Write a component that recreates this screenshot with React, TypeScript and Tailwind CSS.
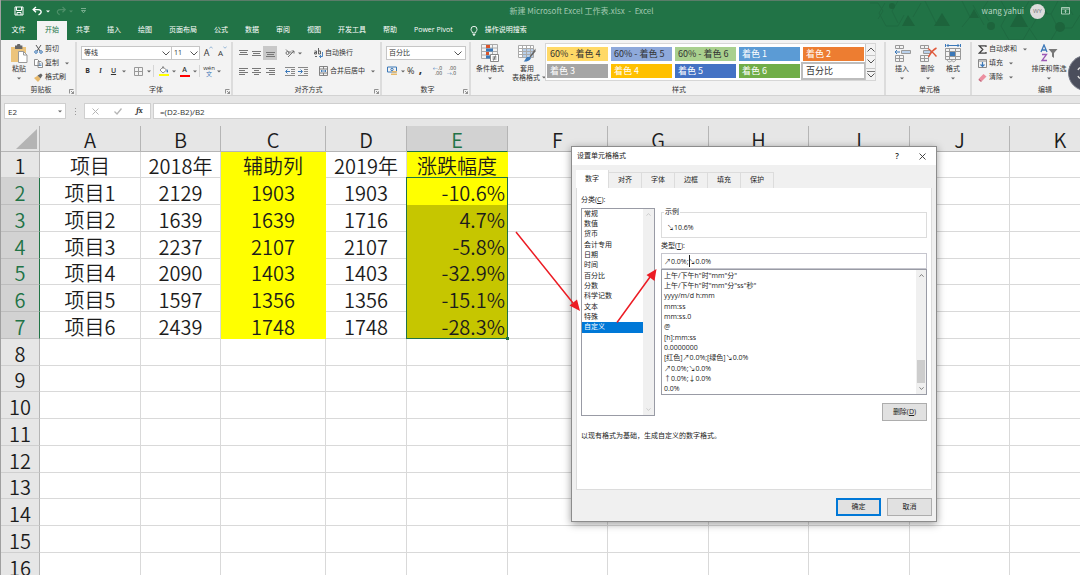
import React, { useState } from 'react';

const menuTabs = ['共享', '插入', '绘图', '页面布局', '公式', '数据', '审阅', '视图', '开发工具', '帮助', 'Power Pivot'];

const cellStyles = [
  { label: '60% - 着色 4', className: 'bg-[#ffd966] text-[#333]' },
  { label: '60% - 着色 5', className: 'bg-[#8ea9db] text-[#333]' },
  { label: '60% - 着色 6', className: 'bg-[#a9d08e] text-[#333]' },
  { label: '着色 1', className: 'bg-[#5b9bd5] text-white' },
  { label: '着色 2', className: 'bg-[#ed7d31] text-white' },
  { label: '着色 3', className: 'bg-[#a5a5a5] text-white' },
  { label: '着色 4', className: 'bg-[#ffc000] text-white' },
  { label: '着色 5', className: 'bg-[#4472c4] text-white' },
  { label: '着色 6', className: 'bg-[#70ad47] text-white' },
  { label: '百分比', className: 'bg-white text-[#333] outline-2 outline-[#bdbdbd]' },
];

const columns = [
  { name: 'A', width: 'w-[101px]' },
  { name: 'B', width: 'w-[80px]' },
  { name: 'C', width: 'w-[105px]' },
  { name: 'D', width: 'w-[81px]' },
  { name: 'E', width: 'w-[101px]' },
  { name: 'F', width: 'w-[100px]' },
  { name: 'G', width: 'w-[101px]' },
  { name: 'H', width: 'w-[100px]' },
  { name: 'I', width: 'w-[101px]' },
  { name: 'J', width: 'w-[100px]' },
  { name: 'K', width: 'w-[101px]' },
];

const data = [
  ['项目', '2018年', '辅助列', '2019年', '涨跌幅度'],
  ['项目1', '2129', '1903', '1903', '-10.6%'],
  ['项目2', '1639', '1639', '1716', '4.7%'],
  ['项目3', '2237', '2107', '2107', '-5.8%'],
  ['项目4', '2090', '1403', '1403', '-32.9%'],
  ['项目5', '1597', '1356', '1356', '-15.1%'],
  ['项目6', '2439', '1748', '1748', '-28.3%'],
];

const categories = ['常规', '数值', '货币', '会计专用', '日期', '时间', '百分比', '分数', '科学记数', '文本', '特殊', '自定义'];

const formats = [
  '上午/下午h"时"mm"分"',
  '上午/下午h"时"mm"分"ss"秒"',
  'yyyy/m/d h:mm',
  'mm:ss',
  'mm:ss.0',
  '@',
  '[h]:mm:ss',
  '0.0000000',
  '[红色]↗0.0%;[绿色]↘0.0%',
  '↗0.0%;↘0.0%',
  '↑0.0%;↓0.0%',
  '0.0%',
];

const Caret = ({ className = 'text-[#666]' }: { className?: string }) => (
  <svg className={`shrink-0 ${className}`} width="4" height="3" viewBox="0 0 4 3">
    <path d="M0 0.5h4L2 2.5z" fill="currentColor" />
  </svg>
);

const Chevron = ({ up = false, className = '' }: { up?: boolean; className?: string }) => (
  <svg className={`shrink-0 ${className}`} width="8" height="5" viewBox="0 0 8 5" fill="none" stroke="currentColor">
    <path d={up ? 'M0.5 4.5L4 1l3.5 3.5' : 'M0.5 0.5L4 4l3.5-3.5'} />
  </svg>
);

const Launcher = () => (
  <svg width="5" height="5" viewBox="0 0 5 5" fill="none" stroke="#777" strokeWidth="0.8">
    <path d="M0.5 4.5V0.5h4M2 2l2.5 2.5M4.5 2.3v2.2H2.3" />
  </svg>
);

const Divider = () => <span className="h-3 w-px shrink-0 bg-[#d5d5d5]" />;

const Group = ({ label, launcher = false, className, children }: { label: string; launcher?: boolean; className: string; children: React.ReactNode }) => (
  <section className={`relative flex shrink-0 flex-col border-r-2 border-[#dcdcdc] ${className}`}>
    <div className="flex flex-1">{children}</div>
    <div className="h-[10px] text-center leading-[10px]">{label}</div>
    {launcher && (
      <button aria-label={label} className="absolute right-px bottom-px">
        <Launcher />
      </button>
    )}
  </section>
);

const SmallButton = ({ label, caret = false, children }: { label: string; caret?: boolean; children: React.ReactNode }) => (
  <button className="flex h-[14px] items-center gap-[2px] whitespace-nowrap">
    {children}
    <span>{label}</span>
    {caret && <span className="pl-1"><Caret /></span>}
  </button>
);

const BigButton = ({ label, className, children }: { label: string; className: string; children: React.ReactNode }) => (
  <button className={`flex shrink-0 flex-col items-center whitespace-nowrap ${className}`}>
    <span className="flex h-[22px] items-center">{children}</span>
    <span className="leading-[10px]">{label}</span>
    <span className="flex h-2 items-center"><Caret /></span>
  </button>
);

const IconButton = ({ label, className = 'w-[13px]', children }: { label: string; className?: string; children: React.ReactNode }) => (
  <button aria-label={label} className={`flex h-[14px] shrink-0 items-center justify-center ${className}`}>
    {children}
  </button>
);

const Lines = ({ d }: { d: string }) => (
  <svg width="9" height="9" viewBox="0 0 9 9" stroke="#777" fill="none">
    <path d={d} />
  </svg>
);

const TitleBar = () => (
  <div className="relative flex h-5 items-center">
    <div className="flex items-center pl-[13px]">
      <button aria-label="保存">
        <svg width="10" height="10" viewBox="0 0 10 10" fill="none" stroke="#fff">
          <path d="M1 1h8v8H1zM2.5 1v3.5h5V1M3 9V6.5h4V9" />
        </svg>
      </button>
      <button aria-label="撤消" className="ml-2 flex items-center gap-[3px]">
        <svg width="11" height="10" viewBox="0 0 11 10" fill="none" stroke="#fff" strokeWidth="1.4">
          <path d="M4 1L1.2 3.6 4 6.2M1.5 3.6h4.5c3 0 3.7 2 2.8 3.4C8.3 8 7.3 8.5 6.5 8.8" />
        </svg>
        <Caret className="text-white" />
      </button>
      <button aria-label="恢复" className="ml-[6px] flex items-center gap-[3px]">
        <svg width="10" height="10" viewBox="0 0 10 10" fill="none" stroke="#4e9069" strokeWidth="1.2">
          <path d="M6.5 1l2.8 2.6-2.8 2.6M9 3.6H4.5c-3 0-3.6 2-2.8 3.4.4.8 1.3 1.3 2 1.6" />
        </svg>
        <Caret className="text-[#4e9069]" />
      </button>
      <button aria-label="自定义快速访问工具栏" className="ml-2">
        <svg width="5" height="6" viewBox="0 0 5 6" fill="none" stroke="#8fbca1" strokeWidth="0.8">
          <path d="M0 0.5h5M0.5 2.5h4L2.5 4.8z" />
        </svg>
      </button>
    </div>
    <h1 className="absolute inset-x-0 pl-[82px] text-center font-['Noto_Sans_CJK_SC',sans-serif] text-[8px] text-[#a3c9b2]">新建 Microsoft Excel 工作表.xlsx &nbsp;-&nbsp; Excel</h1>
    <div className="relative ml-auto flex items-center pr-[10px] text-[8px] text-[#b9d6c4]">
      <span className="font-['Noto_Sans_CJK_SC',sans-serif]">wang yahui</span>
      <span className="ml-[6px] flex size-[15px] items-center justify-center rounded-full bg-[#dcdcdc] text-[6px] text-[#777]">WY</span>
      <button aria-label="功能区显示选项" className="ml-4">
        <svg width="9" height="8" viewBox="0 0 9 8" fill="none" stroke="#c8dfd1" strokeWidth="0.8">
          <path d="M0.5 0.5h8v6.5h-8zM0.5 2h8M4.5 6V3.3M3.2 4.5l1.3-1.3 1.3 1.3" />
        </svg>
      </button>
    </div>
  </div>
);

const HeaderPattern = () => (
  <svg className="absolute top-0 right-0" width="215" height="40" viewBox="0 0 215 40" fill="none" stroke="#1f6a41">
    <path d="M5 2h8l5 8-5 8M20 2l-6 10 7 13h12l6-11M33 0l-6 10 6 12M56 2l-8 14M60 0l11 22M97 0l8 16-8 10M108 4l11 20M124 20l-7-11 6-9M136 0l7 12h14l7-12M143 12l-7 13 8 14h14l7-12M166 0l8 13-8 14M174 13h12l7-13M186 13l7 14-7 12M193 27h14l8-13M200 0l8 14M164 27l8 12" />
    <path d="M43 14l7 11H37zM77 12l8 13H69zM109 8l5 9h-10zM154 10l9 16h-18zM177 4l6 9h-12z" fill="#1d643c" stroke="none" />
    <circle cx="27" cy="5" r="3" fill="#1d643c" stroke="none" />
    <circle cx="126" cy="25" r="4" fill="#1d643c" stroke="none" />
    <circle cx="195" cy="26" r="5" fill="#1d643c" stroke="none" />
  </svg>
);

const Ribbon = () => (
  <div className="flex h-14 overflow-hidden border-b border-[#d2d2d2] bg-[#f3f3f3] pt-[2px] text-[#333]">
    <Group label="剪贴板" launcher className="w-[76px] pl-[6px]">
      <BigButton label="粘贴" className="w-6">
        <svg width="18" height="19" viewBox="0 0 18 19">
          <path d="M1 3h15v15H1z" fill="#ecc47c" />
          <path d="M5 1.5h2a1.7 1.7 0 0 1 3.4 0h2V5H5z" fill="#666" />
          <path d="M8.5 7.5h5l3.5 3.5v7.5H8.5z" fill="#fff" stroke="#999" />
          <path d="M13.5 7.5V11H17" fill="none" stroke="#999" />
        </svg>
      </BigButton>
      <div className="flex flex-col pl-[3px]">
        <SmallButton label="剪切">
          <svg width="9" height="9" viewBox="0 0 9 9" fill="none">
            <path d="M2 0l4 6M7 0L3 6" stroke="#555" />
            <circle cx="2" cy="7" r="1.3" stroke="#3b78b8" />
            <circle cx="7" cy="7" r="1.3" stroke="#3b78b8" />
          </svg>
        </SmallButton>
        <SmallButton label="复制" caret>
          <svg width="9" height="9" viewBox="0 0 9 9" fill="#fff" stroke="#777" strokeWidth="0.8">
            <path d="M0.5 0.5h3L5 2v4.5H0.5zM4 2.5h3L8.5 4v4.5H4z" />
            <path d="M5 5h2.5M5 6.5h2.5" stroke="#3b78b8" />
          </svg>
        </SmallButton>
        <SmallButton label="格式刷">
          <svg width="9" height="9" viewBox="0 0 9 9">
            <path d="M0 5l4-2.5L6.5 6 4 9z" fill="#e8b96b" />
            <path d="M3.5 2.5L7 0.5l1.5 1.7L6.5 5.5z" fill="#666" />
          </svg>
        </SmallButton>
      </div>
    </Group>

    <Group label="字体" launcher className="w-[156px] pl-1">
      <div className="flex flex-1 flex-col gap-1 pt-1">
        <div className="flex items-center">
          <label className="relative flex items-center">
            <select aria-label="字体" className="h-[14px] w-[91px] appearance-none border border-[#c6c6c6] bg-white pl-[2px] text-[7px]">
              <option>等线</option>
            </select>
            <Chevron className="pointer-events-none absolute right-[2px] text-[#555]" />
          </label>
          <label className="relative flex items-center">
            <select aria-label="字号" className="h-[14px] w-7 appearance-none border border-l-0 border-[#c6c6c6] bg-white pl-[2px] text-[7px]">
              <option>11</option>
            </select>
            <Chevron className="pointer-events-none absolute right-[2px] text-[#555]" />
          </label>
          <IconButton label="增大字号" className="ml-[3px] w-[11px] text-[9px]">A<span className="self-start text-[#3b78b8]"><Chevron up className="h-[3px] w-1" /></span></IconButton>
          <IconButton label="减小字号" className="ml-[3px] w-[11px] text-[8px]">A<span className="self-start text-[#3b78b8]"><Chevron className="h-[3px] w-1" /></span></IconButton>
        </div>
        <div className="flex items-center">
          <IconButton label="加粗"><b>B</b></IconButton>
          <IconButton label="倾斜"><i className="font-serif font-bold">I</i></IconButton>
          <IconButton label="下划线"><u className="font-semibold">U</u></IconButton>
          <IconButton label="下划线样式" className="w-2"><Caret /></IconButton>
          <span className="pl-1"><Divider /></span>
          <IconButton label="边框">
            <svg width="9" height="9" viewBox="0 0 9 9" fill="none" stroke="#999">
              <path d="M0.5 0.5h8v8h-8zM4.5 0v9M0 4.5h9" />
            </svg>
          </IconButton>
          <IconButton label="边框样式" className="w-2"><Caret /></IconButton>
          <Divider />
          <IconButton label="填充颜色" className="ml-1 w-3">
            <svg width="10" height="10" viewBox="0 0 10 10">
              <path d="M4 1l3.5 3L4 7 1 4zM4 0v3" fill="#fff" stroke="#777" strokeWidth="0.8" />
              <path d="M8 3c1 1.3 1.5 3 .5 3.5S7.3 5 8 3z" fill="#3b78b8" />
              <path d="M0 8h10v2H0z" fill="#ff0" />
            </svg>
          </IconButton>
          <IconButton label="填充颜色选项" className="w-2"><Caret /></IconButton>
          <IconButton label="字体颜色">
            <span className="flex h-[11px] w-[10px] items-center justify-center border-b-2 border-[#f00] font-semibold">A</span>
          </IconButton>
          <IconButton label="字体颜色选项" className="w-2"><Caret /></IconButton>
          <Divider />
          <IconButton label="拼音" className="ml-[3px] w-3">
            <span className="flex flex-col items-center text-[6px] leading-[6px]">wén<span className="text-[#3b78b8]">文</span></span>
          </IconButton>
          <IconButton label="拼音选项" className="w-2"><Caret /></IconButton>
        </div>
      </div>
    </Group>

    <Group label="对齐方式" launcher className="w-[149px] pl-1">
      <div className="flex flex-1 flex-col gap-1 pt-1">
        <div className="flex items-center">
          <IconButton label="顶端对齐"><Lines d="M0 1.5h9M1 3.5h7M0 5.5h9" /></IconButton>
          <IconButton label="垂直居中"><Lines d="M0 2.5h9M1 4.5h7M0 6.5h9" /></IconButton>
          <IconButton label="底端对齐" className="w-[14px] bg-[#c8c8c8]"><Lines d="M0 3.5h9M1 5.5h7M0 7.5h9" /></IconButton>
          <span className="px-[3px]"><Divider /></span>
          <IconButton label="方向">
            <svg width="10" height="10" viewBox="0 0 10 10" fill="none" stroke="#666" strokeWidth="0.9">
              <circle cx="2.5" cy="5" r="1.5" />
              <path d="M1 1.5l4 4M4.5 3l2 2M3 9l6-6M9 5.5V3H6.5" />
            </svg>
          </IconButton>
          <IconButton label="方向选项" className="w-2"><Caret /></IconButton>
          <span className="px-[5px]"><Divider /></span>
          <SmallButton label="自动换行">
            <svg width="9" height="10" viewBox="0 0 9 10" fill="none" strokeWidth="0.9">
              <path d="M0.5 3h2v3h-2V4.5h2M4.500 0v6h2V3h-2M1 8.500h2" stroke="#555" />
              <path d="M8.500 4v4.500H5.500M7 7L5.500 8.500 7 10" stroke="#3b78b8" />
            </svg>
          </SmallButton>
        </div>
        <div className="flex items-center">
          <IconButton label="左对齐"><Lines d="M0 1.5h9M0 3.5h6M0 5.5h9M0 7.5h6" /></IconButton>
          <IconButton label="居中"><Lines d="M0 1.5h9M2 3.5h5M0 5.5h9M2 7.5h5" /></IconButton>
          <IconButton label="右对齐" className="w-[14px]"><Lines d="M0 1.5h9M3 3.5h6M0 5.5h9M3 7.5h6" /></IconButton>
          <span className="px-[3px]"><Divider /></span>
          <IconButton label="减少缩进量">
            <svg width="10" height="9" viewBox="0 0 10 9" fill="none" stroke="#888">
              <path d="M0 0.5h10M6 2.5h4M6 4.5h4M6 6.5h4M0 8.5h10" />
              <path d="M5 4.5H1M2.5 2.5l-2 2 2 2" stroke="#3b78b8" />
            </svg>
          </IconButton>
          <IconButton label="增加缩进量">
            <svg width="10" height="9" viewBox="0 0 10 9" fill="none" stroke="#888">
              <path d="M0 0.5h10M6 2.5h4M6 4.5h4M6 6.5h4M0 8.5h10" />
              <path d="M0 4.5h4M2.5 2.5l2 2-2 2" stroke="#3b78b8" />
            </svg>
          </IconButton>
          <span className="px-[5px]"><Divider /></span>
          <SmallButton label="合并后居中" caret>
            <svg width="9" height="10" viewBox="0 0 9 10" fill="none" stroke="#777" strokeWidth="0.9">
              <path d="M0.5 0.5h8v9h-8zM0.5 3h8M0.5 7h8M4.5 0.5V3M4.5 7v2.5" />
              <path d="M2 5h5M3 4L2 5l1 1M6 4l1 1-1 1" stroke="#3b78b8" />
            </svg>
          </SmallButton>
        </div>
      </div>
    </Group>

    <Group label="数字" launcher className="w-[89px] pl-1">
      <div className="flex flex-1 flex-col gap-1 pt-1">
        <label className="relative flex items-center">
          <select aria-label="数字格式" className="h-[14px] w-20 appearance-none border border-[#c6c6c6] bg-white pl-[2px] text-[7px]">
            <option>百分比</option>
          </select>
          <Chevron className="pointer-events-none absolute right-[7px] text-[#555]" />
        </label>
        <div className="flex items-center">
          <IconButton label="会计数字格式">
            <svg width="11" height="10" viewBox="0 0 11 10" fill="none">
              <path d="M0.5 1h9v5h-9z" stroke="#3b78b8" />
              <circle cx="5" cy="3.5" r="1.2" stroke="#3b78b8" />
              <path d="M5 5h5v1.5H5zM4 7.5h6V9H4z" fill="#e8b96b" />
            </svg>
          </IconButton>
          <IconButton label="会计数字格式选项" className="w-2"><Caret /></IconButton>
          <IconButton label="百分比样式" className="text-[9px]">%</IconButton>
          <IconButton label="千位分隔样式" className="w-3 pb-1 text-[12px] font-bold">,</IconButton>
          <span className="px-[2px]"><Divider /></span>
          <IconButton label="增加小数位数" className="w-[14px]">
            <span className="flex flex-col text-[5px] leading-[5px]"><span><span className="text-[#3b78b8]">←</span>.0</span><span className="text-right">.00</span></span>
          </IconButton>
          <IconButton label="减少小数位数" className="w-[14px]">
            <span className="flex flex-col text-[5px] leading-[5px]"><span className="text-right">.00</span><span><span className="text-[#3b78b8]">→</span>.0</span></span>
          </IconButton>
        </div>
      </div>
    </Group>

    <Group label="样式" className="w-[415px] pl-[3px]">
      <BigButton label="条件格式" className="w-8">
        <svg width="18" height="18" viewBox="0 0 18 18" fill="none">
          <path d="M0.5 0.5h16v14h-16zM0.5 4h16M0.5 7.5h16M0.5 11h16M6 0.5v14M11.5 0.5v14" stroke="#aaa" />
          <path d="M5 1h4v3H5zM5 8h3v3H5z" fill="#d9542b" />
          <path d="M5 4.5h7v3H5zM5 11.5h4v3H5z" fill="#3b78b8" />
          <path d="M9.5 10.5h8v7h-8z" fill="#fff" stroke="#888" />
          <path d="M11.5 13h4M11.5 15h4M12.5 16.5l2-5" stroke="#555" strokeWidth="0.8" />
        </svg>
      </BigButton>
      <button className="ml-[3px] flex w-9 shrink-0 flex-col items-center whitespace-nowrap">
        <span className="flex h-[22px] items-center">
          <svg width="18" height="18" viewBox="0 0 18 18" fill="none">
            <path d="M0.5 1.5h15v12h-15z" fill="#fff" />
            <path d="M4 5h11v8H4z" fill="#b9d0ea" />
            <path d="M0.5 1.5h15v12h-15zM0.5 4.5h15M0.5 7.5h15M0.5 10.5h15M4.5 1.5v12M8.5 1.5v12M12.5 1.5v12" stroke="#aaa" />
            <path d="M17.5 4.5l-6 8 1 1 5-6z" fill="#666" />
            <path d="M5 17.5c2 0 2-2.5 4-4.5h3l1 1c-1 3-5 4-8 3.5z" fill="#3b78b8" />
          </svg>
        </span>
        <span className="leading-[9px]">套用</span>
        <span className="flex items-center gap-[2px] pl-1 leading-[9px]">表格格式<Caret /></span>
      </button>
      <div className="mt-px flex h-[38px] border border-[#d6d6d6] font-['Noto_Sans_CJK_SC',sans-serif]">
        <div className="grid grid-cols-5 content-center gap-[3px] bg-white px-px">
          {cellStyles.map(s => (
            <button key={s.label} className={`h-[14px] w-[61px] pl-[3px] text-left text-[9px] leading-[14px] whitespace-nowrap ${s.className}`}>
              {s.label}
            </button>
          ))}
        </div>
        <div className="flex w-[10px] flex-col divide-y divide-[#c6c6c6] border-l border-[#c6c6c6] text-[#555]">
          <button aria-label="向上" className="flex flex-1 items-center justify-center"><Chevron up /></button>
          <button aria-label="向下" className="flex flex-1 items-center justify-center"><Chevron /></button>
          <button aria-label="其他" className="flex flex-1 flex-col items-center justify-center gap-px"><span className="h-px w-2 bg-[#777]" /><Chevron /></button>
        </div>
      </div>
    </Group>

    <Group label="单元格" className="w-[86px] pl-[3px]">
      <BigButton label="插入" className="w-[26px]">
        <svg width="17" height="17" viewBox="0 0 17 17" fill="none" stroke="#999">
          <path d="M1.5 0.5h8v3h-8zM5.5 0.5v3M1.5 10.5h8v6h-8zM5.5 10.5v6M1.5 13.5h8" />
          <path d="M7.5 5.5h9v3h-9z" fill="#b9d0ea" />
          <path d="M6 7H1M3 5L1 7l2 2" stroke="#3b78b8" />
        </svg>
      </BigButton>
      <BigButton label="删除" className="w-[25px]">
        <svg width="18" height="17" viewBox="0 0 18 17" fill="none" stroke="#999">
          <path d="M1.5 0.5h8v3h-8zM5.5 0.5v3M1.5 10.5h8v6h-8zM5.5 10.5v6M1.5 13.5h8" />
          <path d="M4.5 5.5h7v3h-7z" fill="#b9d0ea" />
          <path d="M9 3.5c3 2 5 4 8.5 8M17.5 3c-4 2-6 5-8 9" stroke="#e0583a" strokeWidth="1.5" />
        </svg>
      </BigButton>
      <BigButton label="格式" className="w-[26px]">
        <svg width="18" height="19" viewBox="0 0 18 19" fill="none" stroke="#999">
          <path d="M1.5 4.5h15v11h-15zM1.5 7.5h15M1.5 12.5h15M5.5 4.5v11M11.5 4.5v11M3 15.5c1 3 3 3 5 1 1 2 3 1.5 4-1" />
          <path d="M6 8h5v4H6z" fill="#3b78b8" stroke="none" />
          <path d="M1.5 0v3M16.5 0v3M3 1.5h12M4.5 0L3 1.5 4.5 3M13.5 0L15 1.5 13.5 3" stroke="#3b78b8" />
        </svg>
      </BigButton>
    </Group>

    <Group label="编辑" className="w-[142px] border-r-0 pl-[6px]">
      <div className="flex w-[51px] shrink-0 flex-col">
        <SmallButton label="自动求和" caret>
          <svg width="9" height="9" viewBox="0 0 9 9" fill="none" stroke="#444" strokeWidth="1.3">
            <path d="M8 2V0.8H1.2L4.8 4.5 1.2 8.2H8V7" />
          </svg>
        </SmallButton>
        <SmallButton label="填充" caret>
          <svg width="9" height="9" viewBox="0 0 9 9" fill="none">
            <path d="M0.5 0.5h8v8h-8zM0.5 2h8" stroke="#888" />
            <path d="M4.5 3v4.5M2.5 5.5l2 2 2-2" stroke="#3b78b8" strokeWidth="1.2" />
          </svg>
        </SmallButton>
        <SmallButton label="清除" caret>
          <svg width="9" height="9" viewBox="0 0 9 9">
            <path d="M5.5 1L8.5 3.5 4 8 1 5.5z" fill="#ec8fa0" />
            <path d="M1 5.5L4 8l-1 1-2.5-2z" fill="#c9667a" />
          </svg>
        </SmallButton>
      </div>
      <BigButton label="排序和筛选" className="w-10">
        <svg width="18" height="18" viewBox="0 0 18 18" fill="none">
          <path d="M1 8l3-7 3 7M2 6h4" stroke="#3b78b8" strokeWidth="1.3" />
          <path d="M2 10.5h4.5l-4.5 6h5" stroke="#9b59b6" strokeWidth="1.3" />
          <path d="M8.5 5h9l-3.5 4v5l-2-1.5V9z" fill="#777" />
        </svg>
      </BigButton>
      <button className="mt-[22px] h-[10px] leading-[10px]">查</button>
    </Group>
  </div>
);

const FormulaBar = () => (
  <div className="flex h-[30px] items-center bg-[#e6e6e6] text-[8px] text-[#333]">
    <label className="relative ml-[3px] flex items-center">
      <input aria-label="名称框" defaultValue="E2" className="h-4 w-[62px] border border-[#cfcfcf] bg-white pl-[3px]" />
      <span className="absolute right-1"><Caret /></span>
    </label>
    <span className="flex w-[18px] flex-col items-center gap-[2px]">
      <span className="size-px bg-[#999]" />
      <span className="size-px bg-[#999]" />
      <span className="size-px bg-[#999]" />
    </span>
    <div className="flex h-4 w-[67px] items-center justify-around border border-[#cfcfcf] bg-white">
      <button aria-label="取消输入">
        <svg width="7" height="7" viewBox="0 0 7 7" stroke="#b5b5b5"><path d="M0.5 0.5l6 6M6.5 0.5l-6 6" /></svg>
      </button>
      <button aria-label="输入">
        <svg width="8" height="7" viewBox="0 0 8 7" fill="none" stroke="#b5b5b5" strokeWidth="1.3"><path d="M0.5 3.5l2.5 2.5 4.5-5.5" /></svg>
      </button>
      <button aria-label="插入函数" className="font-serif font-bold italic">fx</button>
    </div>
    <input aria-label="编辑栏" defaultValue="=(D2-B2)/B2" className="ml-[2px] h-4 min-w-0 flex-1 border border-r-0 border-[#cfcfcf] bg-white pl-[6px]" />
  </div>
);

const cellClass = (row: number, col: number) => {
  if (col === 2 && row < 7) return 'border-[#ff0] bg-[#ff0] text-center';
  if (col === 4 && row === 0) return 'border-[#ff0] bg-[#ff0] text-center';
  if (col === 4 && row === 1) return 'relative border-[#ff0] bg-[#ff0] pr-[2px] text-right';
  if (col === 4 && row < 7) return 'border-[#c6c600] bg-[#c6c600] pr-[2px] text-right';
  return 'border-[#d9d9d9] bg-white text-center';
};

const Sheet = () => (
  <table className="w-max table-fixed border-separate border-spacing-0 text-[20px] leading-[22px] text-[#1c1c1c]">
    <colgroup>
      <col className="w-[39px]" />
      {columns.map(c => <col key={c.name} className={c.width} />)}
    </colgroup>
    <thead>
      <tr className="h-[26px]">
        <th aria-label="全选" className="border-r border-b border-[#b5b5b5] bg-[#e6e6e6] p-0">
          <svg className="ml-auto mr-px" width="22" height="22" viewBox="0 0 22 22"><path d="M21 1v20H0z" fill="#b4b4b4" /></svg>
        </th>
        {columns.map(c => (
          <th
            key={c.name}
            className={`border-r border-b p-0 pt-[3px] font-[350] ${c.name === 'E' ? 'border-r-[#b5b5b5] border-b-[#217346] bg-[#d2d2d2] text-[#217346]' : 'border-[#b5b5b5] bg-[#e6e6e6]'}`}
          >
            {c.name}
          </th>
        ))}
      </tr>
    </thead>
    <tbody>
      {Array.from({ length: 16 }, (_, row) => (
        <tr key={row} className="h-[27px] nth-[4n+1]:h-[26px]">
          <th
            className={`border-r border-b p-0 pt-[3px] font-[350] ${row > 0 && row < 7 ? 'border-r-[#217346] border-b-[#bdbdbd] bg-[#d2d2d2] text-[#217346]' : 'border-r-[#b5b5b5] border-b-[#cfcfcf] bg-[#e6e6e6]'}`}
          >
            {row + 1}
          </th>
          {columns.map((c, col) => (
            <td key={c.name} className={`border-r border-b p-0 pt-[3px] font-[350] whitespace-nowrap ${cellClass(row, col)}`}>
              {data[row]?.[col]}
              {row === 1 && col === 4 && (
                <span className="pointer-events-none absolute -top-px -right-px -left-px h-[162px] border border-[#217346]">
                  <span className="absolute -right-[2px] -bottom-[2px] size-[3px] bg-[#217346]" />
                </span>
              )}
            </td>
          ))}
        </tr>
      ))}
    </tbody>
  </table>
);

const FormatDialog = () => {
  const [category, setCategory] = useState('自定义');
  const [format, setFormat] = useState('↗0.0%;↘0.0%');

  return (
    <div role="dialog" aria-label="设置单元格格式" className="absolute top-[146px] left-[570px] w-[366px] border border-[#8c8c8c] bg-[#f0f0f0] text-[#222] shadow-[0_2px_8px_rgba(0,0,0,0.4)]">
      <div className="flex h-[18px] items-center bg-white pr-[10px] pl-[5px]">
        <h2>设置单元格格式</h2>
        <button aria-label="帮助" className="ml-auto text-[8px] font-semibold">?</button>
        <button aria-label="关闭" className="ml-5">
          <svg width="7" height="7" viewBox="0 0 7 7" stroke="#333" strokeWidth="0.9"><path d="M0.5 0.5l6 6M6.5 0.5l-6 6" /></svg>
        </button>
      </div>

      <div className="px-1 pt-[5px]">
        <div role="tablist" className="flex items-end">
          {['数字', '对齐', '字体', '边框', '填充', '保护'].map((t, i) => (
            <button
              key={t}
              role="tab"
              className={`w-[33px] border-r border-[#dcdcdc] ${i === 0 ? 'h-[18px] bg-white' : 'h-4 border-t bg-[#f0f0f0]'}`}
            >
              {t}
            </button>
          ))}
        </div>
        <div className="border border-t-0 border-[#dcdcdc] bg-white pt-[7px] pr-1 pb-12 pl-1">
          <div className="flex gap-[6px]">
            <div className="w-[74px] shrink-0">
              <div id="category-label" className="leading-[10px]">分类(<u>C</u>):</div>
              <div className="mt-[3px] flex h-[208px] border border-[#999ba5]">
                <ul role="listbox" aria-labelledby="category-label" className="flex-1">
                  {categories.map(c => (
                    <li
                      key={c}
                      role="option"
                      aria-selected={c === category}
                      onClick={() => setCategory(c)}
                      className={`h-[10px] pl-[2px] leading-[10px] nth-[3n]:h-[11px] ${c === category ? 'bg-[#0078d7] text-white' : ''}`}
                    >
                      {c}
                    </li>
                  ))}
                </ul>
                <div className="flex w-[11px] flex-col items-center justify-between bg-[#f0f0f0] py-1 text-[#b5b5b5]">
                  <Chevron up className="h-[3px] w-[5px]" />
                  <Chevron className="h-[3px] w-[5px]" />
                </div>
              </div>
            </div>

            <div className="min-w-0 flex-1">
              <fieldset className="mt-3 h-[31px] border border-[#dcdcdc] px-[5px]">
                <legend className="-ml-[3px] px-px leading-[10px]">示例</legend>
                <div className="pt-[6px] leading-[10px]">↘10.6%</div>
              </fieldset>
              <label htmlFor="format-type" className="mt-[3px] block leading-[10px]">类型(<u>T</u>):</label>
              <div className="relative mt-[2px]">
                <input
                  id="format-type"
                  value={format}
                  onChange={e => setFormat(e.target.value)}
                  className="block h-4 w-full border border-[#c6c6ce] bg-white px-[2px]"
                />
                <span className="absolute top-[2px] left-7 h-3 w-px bg-[#222]" />
              </div>
              <div className="flex h-[126px] border border-[#999ba5]">
                <ul role="listbox" aria-label="类型" className="flex-1 pt-px">
                  {formats.map(f => (
                    <li key={f} role="option" aria-selected={false} onClick={() => setFormat(f)} className="h-[10px] pl-[2px] leading-[10px] whitespace-nowrap nth-[3n]:h-[11px]">
                      {f}
                    </li>
                  ))}
                </ul>
                <div className="flex w-[10px] flex-col items-center bg-[#f0f0f0] py-1 text-[#333]">
                  <Chevron up className="h-[3px] w-[5px]" />
                  <span className="mt-auto mb-1 h-[23px] w-2 bg-[#cdcdcd]" />
                  <Chevron className="h-[3px] w-[5px]" />
                </div>
              </div>
              <button className="mt-2 ml-auto block h-[18px] w-[45px] border border-[#adadad] bg-[#e1e1e1]">
                删除(<u>D</u>)
              </button>
            </div>
          </div>
          <p className="mt-[10px] leading-[10px]">以现有格式为基础，生成自定义的数字格式。</p>
        </div>
        <div className="flex justify-end gap-[6px] pt-2 pb-[5px]">
          <button className="h-[18px] w-[45px] border-2 border-[#0078d7] bg-[#e1e1e1]">确定</button>
          <button className="h-[18px] w-[45px] border border-[#adadad] bg-[#e1e1e1]">取消</button>
        </div>
      </div>
    </div>
  );
};

const Arrows = () => (
  <svg className="pointer-events-none absolute top-0 -left-px" width="700" height="400" viewBox="0 0 700 400" stroke="#ec1c24" strokeWidth="1.5" fill="#ec1c24">
    <path d="M516 232L573 303M617 322.5L650 277" />
    <path d="M580 311L569.5 305.500 577 299.500zM656.500 269L646.500 275 654.500 281z" stroke="none" />
  </svg>
);

const App: React.FC = () => {
  return (
    <div lang="zh-CN" className="relative flex h-screen flex-col overflow-hidden border-l border-[#a0a0a0] bg-white font-['Open_Sans','Noto_Sans_CJK_SC',sans-serif] text-[7px]">
      <header className="relative shrink-0 overflow-hidden border-t border-[#5b7c69] bg-[#217346] text-white">
        <HeaderPattern />
        <TitleBar />
        <nav className="relative flex h-[19px] items-stretch gap-px">
          <button className="w-[35px]">文件</button>
          <button className="bg-[#f3f3f3] px-2 text-[#217346]">开始</button>
          {menuTabs.map(t => <button key={t} className="px-2 whitespace-nowrap">{t}</button>)}
          <button className="flex items-center gap-[7px] pl-2 whitespace-nowrap">
            <svg width="8" height="10" viewBox="0 0 8 10" fill="none" stroke="#fff" strokeWidth="0.9">
              <path d="M2.5 7C2.5 5.5 1 5 1 3.3a3 3 0 0 1 6 0C7 5 5.5 5.5 5.5 7zM2.7 8.5h2.6M3.2 9.7h1.6" />
            </svg>
            操作说明搜索
          </button>
        </nav>
      </header>
      <Ribbon />
      <FormulaBar />
      <main className="min-h-0 flex-1 font-['Noto_Sans_CJK_SC',sans-serif]">
        <Sheet />
      </main>
      <FormatDialog />
      <Arrows />
      <button aria-label="悬浮助手" className="absolute top-[55px] -right-[24px] flex size-9 items-center rounded-full border border-[#777b88] bg-[#4b4e5c] pl-2">
        <svg width="14" height="14" viewBox="0 0 14 14" fill="none" stroke="#ddd" strokeWidth="1.5">
          <path d="M1 4a4 4 0 0 1 6-2M4 7h3M1 10a4 4 0 0 0 6 2" />
        </svg>
      </button>
    </div>
  );
};

export default App;
